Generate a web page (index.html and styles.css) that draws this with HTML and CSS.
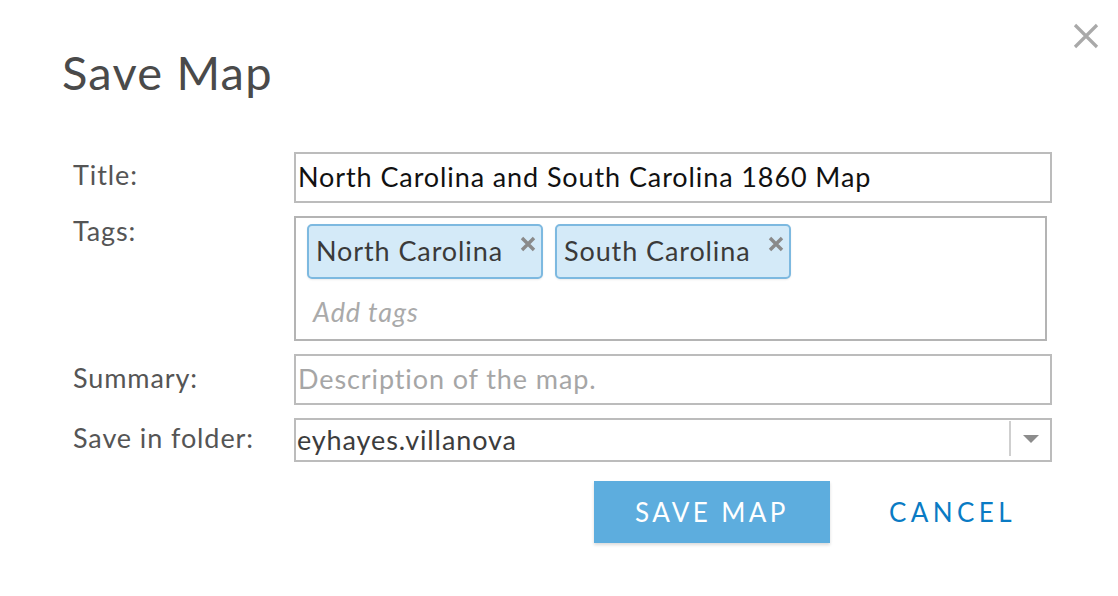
FILE: index.html
```html
<!DOCTYPE html>
<html>
<head>
<meta charset="utf-8">
<link rel="stylesheet" href="styles.css">
</head>
<body>
<div class="dialog">
  <button class="close" aria-label="Close">
    <svg width="26" height="26" viewBox="0 0 26 26"><path d="M2 2 L24 24 M24 2 L2 24" stroke="#a9a9a9" stroke-width="3.2" stroke-linecap="butt"/></svg>
  </button>
  <h1 class="heading">Save Map</h1>
  <div class="form">
    <label class="label label-title">Title:</label>
    <div class="input input-title">North Carolina and South Carolina 1860 Map</div>

    <label class="label label-tags">Tags:</label>
    <div class="tags">
      <div class="chips">
        <span class="chip">North Carolina<span class="chip-x"><svg width="16" height="16" viewBox="0 0 16 16"><path d="M2 2 L14 14 M14 2 L2 14" stroke="#8a8a8a" stroke-width="3.4"/></svg></span></span>
        <span class="chip">South Carolina<span class="chip-x"><svg width="16" height="16" viewBox="0 0 16 16"><path d="M2 2 L14 14 M14 2 L2 14" stroke="#8a8a8a" stroke-width="3.4"/></svg></span></span>
      </div>
      <div class="tag-placeholder">Add tags</div>
    </div>

    <label class="label label-summary">Summary:</label>
    <div class="input input-summary placeholder">Description of the map.</div>

    <label class="label label-folder">Save in folder:</label>
    <div class="select">
      <span class="select-value">eyhayes.villanova</span>
      <span class="select-arrow"><svg width="16" height="8" viewBox="0 0 16 8"><path d="M0 0 H16 L8 8 Z" fill="#8c8c8c"/></svg></span>
    </div>
  </div>
  <div class="actions">
    <button class="btn-primary">SAVE MAP</button>
    <button class="btn-link">CANCEL</button>
  </div>
</div>
</body>
</html>
```

FILE: styles.css
```css
html, body {
  margin: 0;
  padding: 0;
  background: #fff;
}
body {
  font-family: "Lato", "Noto Sans", sans-serif;
  color: #4a4a4a;
}
.dialog {
  position: relative;
  width: 1118px;
  height: 596px;
  box-sizing: border-box;
  padding: 40px 0 0 62px;
}
.close {
  position: absolute;
  top: 23px;
  left: 1073px;
  border: 0;
  background: none;
  padding: 0;
  width: 26px;
  height: 26px;
  cursor: pointer;
}
.close svg { display: block; }
.heading {
  margin: 0;
  font-weight: 400;
  font-size: 47px;
  line-height: 64px;
  color: #4a4a4a;
  letter-spacing: 1.2px;
}
.form {
  margin-top: 48px;
  margin-left: 11px;
  display: grid;
  grid-template-columns: 221px 758px;
  row-gap: 13px;
}
.label {
  font-size: 27px;
  line-height: 30px;
  letter-spacing: 0.9px;
  color: #555;
}
.label-title { padding-top: 8px; }
.label-tags { padding-top: 0; }
.label-summary { padding-top: 9px; }
.label-folder { padding-top: 5px; }
.input {
  box-sizing: border-box;
  height: 51px;
  border: 2px solid #bcbcbc;
  padding: 0 0 0 2px;
  font-size: 27px;
  letter-spacing: 0.9px;
  line-height: 46px;
  color: #111;
  white-space: nowrap;
  overflow: hidden;
}
.placeholder { color: #a6a6a6; }
.tags {
  box-sizing: border-box;
  width: 753px;
  height: 125px;
  border: 2px solid #b4b4b4;
  padding: 6px 11px;
}
.chips {
  display: flex;
  gap: 12px;
}
.chip {
  box-sizing: border-box;
  display: inline-flex;
  align-items: flex-start;
  height: 55px;
  padding: 0 5px 0 7px;
  background: #d4eaf8;
  border: 2px solid #7db9e0;
  border-radius: 5px;
  font-size: 27px;
  letter-spacing: 0.9px;
  line-height: 49px;
  color: #3a3a3a;
  box-shadow: 0 1px 2px rgba(0,0,0,0.08);
}
.chip-x {
  margin-left: 17px;
  margin-top: 10px;
  line-height: 0;
}
.tag-placeholder {
  margin-top: 14px;
  padding-left: 6px;
  font-size: 27px;
  letter-spacing: 0.9px;
  line-height: 38px;
  font-style: italic;
  color: #aaa;
}
.select {
  box-sizing: border-box;
  height: 44px;
  border: 2px solid #bcbcbc;
  display: flex;
  align-items: stretch;
}
.select-value {
  flex: 1;
  padding-left: 1px;
  font-size: 27px;
  letter-spacing: 0.9px;
  line-height: 40px;
  color: #3c3c3c;
}
.select-arrow {
  width: 39px;
  display: flex;
  align-items: center;
  justify-content: center;
  margin: 1px 0 4px;
  border-left: 2px solid #cfcfcf;
}
.actions {
  display: flex;
  align-items: center;
  margin-top: 19px;
  padding-left: 532px;
}
.btn-primary {
  width: 236px;
  height: 62px;
  border: 0;
  background: #5dadde;
  color: #fff;
  font-family: inherit;
  font-size: 26px;
  letter-spacing: 3.4px;
  box-shadow: 0 2px 3px rgba(0,0,0,0.15);
  cursor: pointer;
}
.btn-link {
  margin-left: 59px;
  border: 0;
  background: none;
  padding: 0;
  color: #0a7bc4;
  font-family: inherit;
  font-size: 26px;
  letter-spacing: 4.4px;
  cursor: pointer;
}
```
